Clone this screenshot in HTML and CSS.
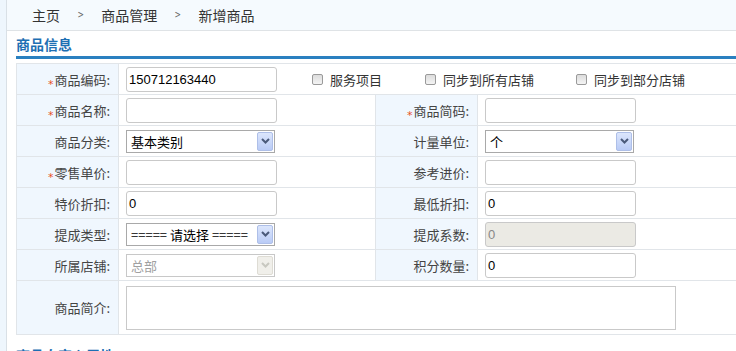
FILE: index.html
```html
<!DOCTYPE html>
<html lang="zh">
<head>
<meta charset="utf-8">
<title>新增商品</title>
<link rel="stylesheet" href="styles.css">
</head>
<body>
<div class="page">
  <div class="side"></div>
  <div class="main">
    <div class="crumbs">
      <span>主页</span><span class="sep">&gt;</span><span>商品管理</span><span class="sep">&gt;</span><span>新增商品</span>
    </div>
    <div class="content">
      <h2 class="sec-title">商品信息</h2>
      <table class="form">
        <colgroup><col class="c-lab"><col class="c-in"><col class="c-lab"><col class="c-in2"></colgroup>
        <tr>
          <td class="lab"><span class="req">*</span>商品编码:</td>
          <td colspan="3" class="fld">
            <div class="row1">
              <span class="inp">150712163440</span>
              <label class="chk chk1"><span class="box"></span>服务项目</label>
              <label class="chk chk2"><span class="box"></span>同步到所有店铺</label>
              <label class="chk chk3"><span class="box"></span>同步到部分店铺</label>
            </div>
          </td>
        </tr>
        <tr>
          <td class="lab"><span class="req">*</span>商品名称:</td>
          <td class="fld"><span class="inp"></span></td>
          <td class="lab"><span class="req">*</span>商品简码:</td>
          <td class="fld"><span class="inp"></span></td>
        </tr>
        <tr>
          <td class="lab">商品分类:</td>
          <td class="fld"><span class="sel"><span class="sel-t">基本类别</span><span class="arr"><svg width="9" height="6" viewBox="0 0 9 6"><path d="M1 1 L4.5 4.5 L8 1" fill="none" stroke="#4a5a7a" stroke-width="2"/></svg></span></span></td>
          <td class="lab">计量单位:</td>
          <td class="fld"><span class="sel"><span class="sel-t">个</span><span class="arr"><svg width="9" height="6" viewBox="0 0 9 6"><path d="M1 1 L4.5 4.5 L8 1" fill="none" stroke="#4a5a7a" stroke-width="2"/></svg></span></span></td>
        </tr>
        <tr>
          <td class="lab"><span class="req">*</span>零售单价:</td>
          <td class="fld"><span class="inp"></span></td>
          <td class="lab">参考进价:</td>
          <td class="fld"><span class="inp"></span></td>
        </tr>
        <tr>
          <td class="lab">特价折扣:</td>
          <td class="fld"><span class="inp">0</span></td>
          <td class="lab">最低折扣:</td>
          <td class="fld"><span class="inp">0</span></td>
        </tr>
        <tr>
          <td class="lab">提成类型:</td>
          <td class="fld"><span class="sel"><span class="sel-t">===== 请选择 =====</span><span class="arr"><svg width="9" height="6" viewBox="0 0 9 6"><path d="M1 1 L4.5 4.5 L8 1" fill="none" stroke="#4a5a7a" stroke-width="2"/></svg></span></span></td>
          <td class="lab">提成系数:</td>
          <td class="fld"><span class="inp dis">0</span></td>
        </tr>
        <tr>
          <td class="lab">所属店铺:</td>
          <td class="fld"><span class="sel sel-dis"><span class="sel-t">总部</span><span class="arr"><svg width="9" height="6" viewBox="0 0 9 6"><path d="M1 1 L4.5 4.5 L8 1" fill="none" stroke="#c8c8c0" stroke-width="2"/></svg></span></span></td>
          <td class="lab">积分数量:</td>
          <td class="fld"><span class="inp">0</span></td>
        </tr>
        <tr class="tall">
          <td class="lab">商品简介:</td>
          <td colspan="3" class="fld"><span class="area"></span></td>
        </tr>
      </table>
      <h2 class="sec-title sec2">商品自定义属性</h2>
    </div>
  </div>
</div>
</body>
</html>
```

FILE: styles.css
```css
* { box-sizing: border-box; }
html, body { margin: 0; padding: 0; background: #fff; overflow: hidden; }
body {
  font-family: "Noto Sans CJK SC", "DejaVu Sans", sans-serif;
  font-size: 13px;
  color: #333;
  width: 736px;
  height: 351px;
}
.page { display: flex; height: 351px; }
.side {
  width: 7px;
  flex: none;
  background: #eef6fd;
  border-right: 1px solid #d9e0e6;
}
.main { flex: 1; min-width: 0; }
.crumbs {
  height: 31px;
  background: #f5fafe;
  border-bottom: 1px solid #dfe3e6;
  padding-left: 25px;
  display: flex;
  align-items: center;
  font-size: 14px;
  color: #333;
  line-height: 30px;
}
.crumbs .sep {
  margin: 0 16px 0 16px;
  font-family: "DejaVu Sans", sans-serif;
  font-size: 11px;
  color: #666;
  transform: scaleX(0.7);
}
.content { padding-left: 9px; }
.sec-title {
  margin: 0;
  height: 28px;
  padding-top: 3px;
  line-height: 20px;
  font-size: 14px;
  font-weight: bold;
  color: #1e6fb3;
  border-bottom: 3px solid #2a80c0;
}
.form {
  margin-top: 4px;
  border-collapse: collapse;
  width: 720px;
  table-layout: fixed;
}
.c-lab { width: 102px; }
.c-in { width: 257px; }
.c-in2 { width: 259px; }
.form td {
  border: 1px solid #e1e5e9;
  height: 31px;
  padding: 0;
  vertical-align: middle;
}
.form tr.tall td { height: 54px; }
.lab {
  background: #f0f7fe;
  text-align: right;
  padding-right: 8px !important;
  color: #444;
  white-space: nowrap;
}
.req {
  color: #e8501e;
  font-family: "DejaVu Sans", sans-serif;
  font-size: 11px;
  position: relative;
  top: 3px;
  margin-right: 1px;
}
.fld { padding-left: 7px !important; }
.inp {
  display: inline-flex;
  align-items: center;
  width: 151px;
  height: 25px;
  border: 1px solid #c9c9c9;
  border-radius: 3px;
  background: #fff;
  padding-left: 2px;
  font-family: "Liberation Sans", Arial, sans-serif;
  font-size: 13px;
  color: #000;
  vertical-align: middle;
}
.inp.dis { background: #ebeae4; color: #888; }
.sel {
  display: inline-flex;
  align-items: center;
  width: 149px;
  height: 23px;
  border: 1px solid #a9a9a9;
  background: #fff;
  padding: 0 1px 0 4px;
  vertical-align: middle;
  color: #000;
}
.sel-t { flex: 1; white-space: nowrap; overflow: hidden; font-size: 13px; }
.arr {
  width: 16px;
  height: 19px;
  flex: none;
  border: 1px solid #aebfe8;
  border-radius: 2px;
  background: linear-gradient(#dce6fc, #b9cbf6);
  display: flex;
  align-items: center;
  justify-content: center;
}
.sel-dis { border-color: #c8c8c8; color: #a0a0a0; }
.sel-dis .arr { background: #f0efea; border-color: #dedcd4; }
.row1 { display: flex; align-items: center; }
.chk {
  display: inline-flex;
  align-items: center;
  white-space: nowrap;
  color: #333;
}
.chk .box {
  width: 11px;
  height: 11px;
  border: 1px solid #9a9a9a;
  border-radius: 2px;
  background: linear-gradient(#dcdcdc, #f4f4f4);
  margin-right: 7px;
}
.chk1 { margin-left: 35px; }
.chk2 { margin-left: 43px; }
.chk3 { margin-left: 42px; }
.area {
  display: block;
  width: 550px;
  height: 44px;
  border: 1px solid #c9c9c9;
  background: #fff;
}
.sec2 { margin-top: 7px; border-bottom: none; }
```
